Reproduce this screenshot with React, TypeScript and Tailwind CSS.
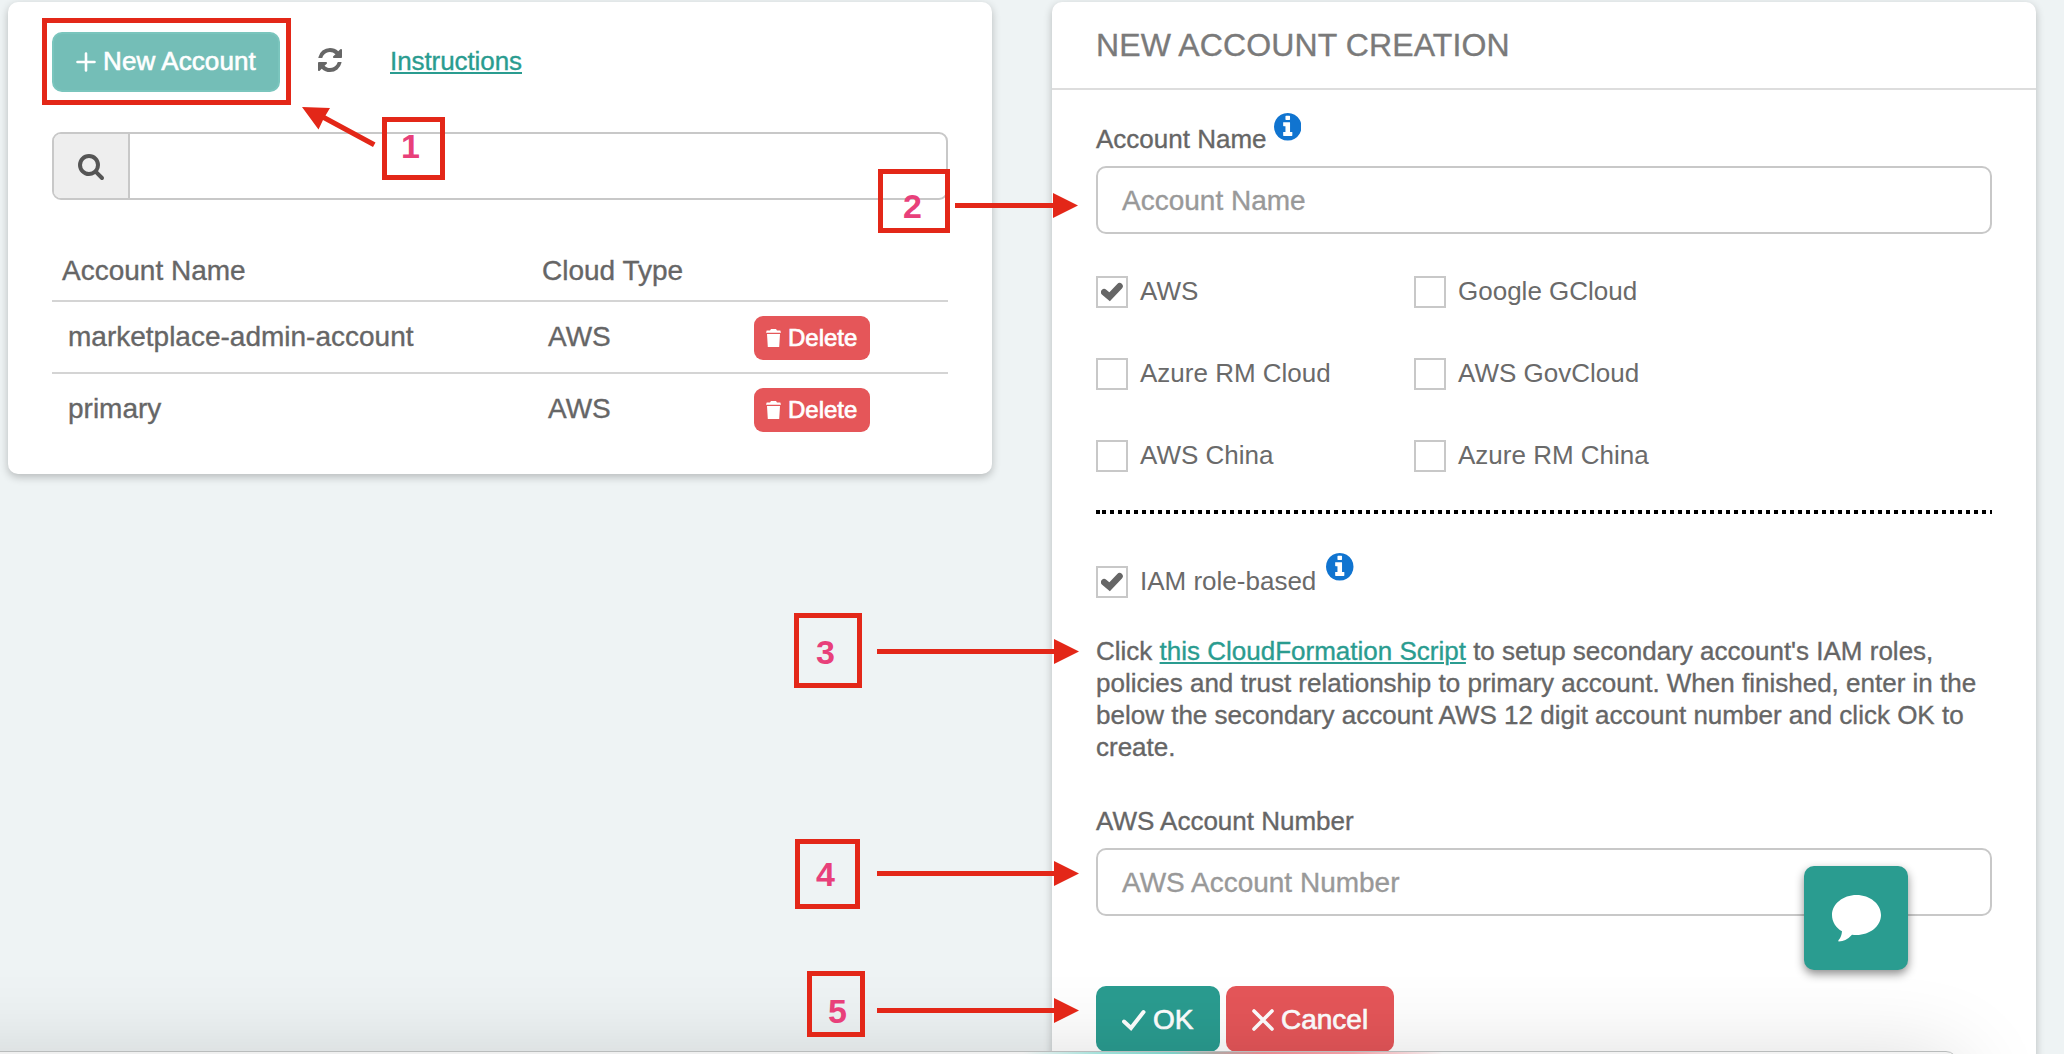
import React from "react";

const REFRESH =
  "M1639 1056q0 5-1 7-64 268-268 434.5t-478 166.5q-146 0-282.5-55t-243.5-157l-129 129q-19 19-45 19t-45-19-19-45v-448q0-26 19-45t45-19h448q26 0 45 19t19 45-19 45l-137 137q71 66 161 102t187 36q134 0 250-65t186-179q11-17 53-117 8-23 30-23h192q13 0 22.5 9.5t9.5 22.5zm25-800v448q0 26-19 45t-45 19h-448q-26 0-45-19t-19-45 19-45l138-138q-148-137-349-137-134 0-250 65t-186 179q-11 17-53 117-8 23-30 23h-199q-13 0-22.5-9.5t-9.5-22.5v-7q65-268 270-434.5t480-166.5q146 0 284 55.5t245 156.5l130-129q19-19 45-19t45 19 19 45z";
const SEARCH =
  "M1216 832q0-185-131.5-316.5t-316.5-131.5-316.5 131.5-131.5 316.5 131.5 316.5 316.5 131.5 316.5-131.5 131.5-316.5zm512 832q0 52-38 90t-90 38q-54 0-90-38l-343-342q-179 124-399 124-143 0-273.5-55.5t-225-150-150-225-55.5-273.5 55.5-273.5 150-225 225-150 273.5-55.5 273.5 55.5 225 150 150 225 55.5 273.5q0 220-124 399l343 343q37 37 37 90z";
const INFO =
  "M1152 1376v-160q0-14-9-23t-23-9h-96v-512q0-14-9-23t-23-9h-320q-14 0-23 9t-9 23v160q0 14 9 23t23 9h96v320h-96q-14 0-23 9t-9 23v160q0 14 9 23t23 9h448q14 0 23-9t9-23zm-128-896v-160q0-14-9-23t-23-9h-192q-14 0-23 9t-9 23v160q0 14 9 23t23 9h192q14 0 23-9t9-23zm640 416q0 209-103 385.5t-279.5 279.5-385.5 103-385.5-103-279.5-279.5-103-385.5 103-385.5 279.5-279.5 385.5-103 385.5 103 279.5 279.5 103 385.5z";

function Info() {
  return (
    <svg className="size-[27.5px] shrink-0 text-[#1074d0]" viewBox="128 128 1536 1536" fill="currentColor">
      <path d={INFO} />
    </svg>
  );
}

function Check({ label, checked = false }: { label: string; checked?: boolean }) {
  return (
    <label className="flex h-8 items-start">
      <span className="flex size-8 items-center justify-center border-2 border-[#c8c8c8] bg-white">
        {checked && (
          <svg className="h-5 w-[22px]" viewBox="0 0 22 20" fill="none" stroke="#666" strokeWidth="6.4" strokeLinecap="round" strokeLinejoin="miter">
            <path d="M3.2 10.2 L8.6 14.8 L18.6 4.2" />
          </svg>
        )}
      </span>
      <span className="ml-3 leading-[30px] text-[#6a6a6a] [-webkit-text-stroke:0]">{label}</span>
    </label>
  );
}

function Row({ name }: { name: string }) {
  return (
    <div className="flex h-[72px] items-start border-t-2 border-[#d4d4d4] pl-4 text-[28px]">
      <span className="w-[480px] pt-[19px] leading-8">{name}</span>
      <span className="w-[206px] pt-[19px] leading-8">AWS</span>
      <button className="mt-3.5 flex h-11 w-[116px] items-center rounded-[9px] bg-[#e55659] pl-3 text-2xl text-white [-webkit-text-stroke:0.7px_white]">
        <svg className="mr-[7px] h-[18px] w-[15px]" viewBox="0 0 15 18" fill="currentColor">
          <path d="M5 0h5l1 1.5h3.3l.7 2.2H0l.7-2.200H4zM1 5h13l-.8 13H1.800z" />
        </svg>
        Delete
      </button>
    </div>
  );
}

function LeftPanel() {
  return (
    <section className="h-[472px] w-[984px] shrink-0 rounded-[10px] bg-white px-11 pt-[30px] shadow-[0_3px_8px_rgba(0,0,0,0.24)]">
      <div className="flex h-[60px] items-center">
        <button className="flex h-[60px] w-[228px] items-center rounded-[10px] border-2 border-[#7ac5bd] bg-[#74beb7] pl-[22px] text-white [-webkit-text-stroke:0.6px_white]">
          <svg className="mr-[7px] size-5" viewBox="0 0 20 20" stroke="currentColor" strokeWidth="2.6" strokeLinecap="round">
            <path d="M10 1.500v17M1.500 10h17" />
          </svg>
          <span className="pb-0.5 tracking-[0.1px]">New Account</span>
        </button>
        <svg className="mb-1 ml-[38px] size-6 text-[#666]" viewBox="128 128 1536 1536" fill="currentColor">
          <path d={REFRESH} />
        </svg>
        <a className="ml-12 pb-0.5 tracking-[-0.08px] text-[#2a9c90] underline decoration-2 underline-offset-2">Instructions</a>
      </div>
      <div className="mt-10 flex h-[68px] rounded-[9px] border-2 border-[#c8c8c8]">
        <span className="flex w-[76px] items-center justify-center rounded-l-[7px] border-r-2 border-[#c8c8c8] bg-[#eee] pr-px pt-0.5">
          <svg className="size-[26px] text-[#555]" viewBox="64 128 1664 1664" fill="currentColor">
            <path d={SEARCH} />
          </svg>
        </span>
      </div>
      <div className="flex h-[100px] items-end pb-[13px] pl-2.5 text-[28px] leading-8">
        <span className="w-[480px]">Account Name</span>
        <span>Cloud Type</span>
      </div>
      <Row name="marketplace-admin-account" />
      <Row name="primary" />
    </section>
  );
}

function Field({ text }: { text: string }) {
  return (
    <div className="h-[68px] rounded-[10px] border-2 border-[#c8c8c8] pl-6 text-[28px] leading-[66px] text-[#999]">{text}</div>
  );
}

function RightPanel() {
  return (
    <section className="h-[1100px] w-[984px] shrink-0 rounded-[10px] bg-white shadow-[0_3px_8px_rgba(0,0,0,0.24)]">
      <h1 className="h-[88px] border-b-2 border-[#ddd] pl-11 text-[32px] leading-[86px] tracking-[0.12px] text-[#7a7a7a]">NEW ACCOUNT CREATION</h1>
      <div className="px-11">
        <div className="flex h-[76px] items-start pt-[23px]">
          <span className="mr-[7px] pt-[11px] leading-[30px]">Account Name</span>
          <Info />
        </div>
        <Field text="Account Name" />
        <div className="mt-[42px] grid grid-cols-[318px_1fr] gap-y-[50px]">
          <Check label="AWS" checked />
          <Check label="Google GCloud" />
          <Check label="Azure RM Cloud" />
          <Check label="AWS GovCloud" />
          <Check label="AWS China" />
          <Check label="Azure RM China" />
        </div>
        <div className="mt-[38px] flex h-1 gap-0.5">
          <span className="w-1 bg-black" />
          <span className="flex-1 bg-[repeating-linear-gradient(90deg,#000_0_4px,transparent_4px_8px)]" />
        </div>
        <div className="mt-[39px] flex h-[45px] items-start gap-2.5">
          <div className="pt-[13px]">
            <Check label="IAM role-based" checked />
          </div>
          <Info />
        </div>
        <p className="mt-[37px] leading-8">
          Click <a className="text-[#2a9c90] underline decoration-2 underline-offset-2">this CloudFormation Script</a> to setup secondary account's IAM roles,
          <br />
          policies and trust relationship to primary account. When finished, enter in the
          <br />
          below the secondary account AWS 12 digit account number and click OK to
          <br />
          create.
        </p>
        <div className="mt-[42px] h-[43px] leading-8">AWS Account Number</div>
        <Field text="AWS Account Number" />
        <div className="mt-[70px] flex gap-1.5 text-[28px] text-white [-webkit-text-stroke:0.7px_white]">
          <button className="flex h-[66px] w-[124px] items-center rounded-[10px] bg-[#2a9c90] pl-[26px] pt-0.5">
            <svg className="mr-[7px] h-[22px] w-6" viewBox="0 0 24 22" fill="none" stroke="currentColor" strokeWidth="4" strokeLinecap="round">
              <path d="M2 12.500 L9 19 L21.500 3" />
            </svg>
            OK
          </button>
          <button className="flex h-[66px] w-[168px] items-center rounded-[10px] bg-[#e55659] pl-[26px] pt-0.5">
            <svg className="mr-[7px] size-[22px]" viewBox="0 0 22 22" fill="none" stroke="currentColor" strokeWidth="3.6" strokeLinecap="round">
              <path d="M2 2 L20 20 M20 2 L2 20" />
            </svg>
            Cancel
          </button>
        </div>
      </div>
    </section>
  );
}

/* Numbered callouts lying over the page */
function Callout({ n, box, num }: { n: string; box: string; num: string }) {
  return (
    <div className={"absolute border-[5px] border-[#e32718] " + box}>
      <span className={"absolute text-[34px] font-bold leading-none text-[#e8407a] [-webkit-text-stroke:0] " + num}>{n}</span>
    </div>
  );
}

function Arrow({ at, shaft }: { at: string; shaft: string }) {
  return (
    <div className={"absolute flex h-[26px] items-center " + at}>
      <span className={"h-[5px] bg-[#e32718] " + shaft} />
      <svg className="h-[25px] w-[25px]" viewBox="0 0 25 25" fill="#e32718">
        <path d="M0 0L25 12.500L0 25z" />
      </svg>
    </div>
  );
}

export default function App() {
  return (
    <div className="relative h-[1054px] w-[2064px] overflow-hidden bg-[#eef3f4] font-['Liberation_Sans',Arial,sans-serif] text-[26px] text-[#666] [-webkit-text-stroke:0.35px_currentColor]">
      <main className="flex items-start gap-[60px] pl-2 pt-0.5">
        <LeftPanel />
        <RightPanel />
      </main>

      {/* Top edge and shadow of the window in front */}
      <div className="absolute -left-52 top-[1051px] h-[300px] w-[2166px] rounded-[12px] border border-[#b9bcbc] bg-[linear-gradient(90deg,#f0f0f0_0_1230px,#9fe0d9_1310px,#7fcfc6_1380px,#b0a8a4_1420px,#e58a90_1470px,#f0a0a6_1560px,#f3f3f3_1650px)] shadow-[0_10px_90px_rgba(0,0,0,0.16)]" />

      <div className="absolute left-[1804px] top-[866px] flex size-[104px] items-center justify-center rounded-[10px] bg-[#2a9c90] shadow-[0_4px_10px_rgba(0,0,0,0.45)]">
        <svg className="h-[47px] w-[49px]" viewBox="0 0 49 47" fill="#fff">
          <path d="M24.500 0C38 0 49 9 49 20S38 40 24.500 40Q22 40 20 39.700Q14 46.500 6.500 46.400Q6 45.500 6.800 44.800Q9.500 42 10 36.300C4 32.800 0 27 0 20C0 9 11 0 24.500 0z" />
        </svg>
      </div>

      <div className="absolute left-[42px] top-[18px] h-[87px] w-[249px] border-[5px] border-[#e32718]" />
      <svg className="absolute left-[300px] top-[104px] h-[46px] w-[78px]" viewBox="0 0 78 46" fill="#e32718">
        <path d="M2 3L30 4L25.500 11.500L75.500 38.500L73 43L23 16L18.500 25.500z" />
      </svg>
      <Callout n="1" box="left-[382px] top-[117px] h-[63px] w-[63px]" num="left-[14px] top-[7px]" />
      <Callout n="2" box="left-[878px] top-[169px] h-[64px] w-[72px]" num="left-[20px] top-[15px]" />
      <Callout n="3" box="left-[794px] top-[613px] h-[75px] w-[68px]" num="left-[17px] top-[17px]" />
      <Callout n="4" box="left-[795px] top-[839px] h-[70px] w-[65px]" num="left-[16px] top-[13px]" />
      <Callout n="5" box="left-[807px] top-[971px] h-[66px] w-[58px]" num="left-[16px] top-[18px]" />
      <Arrow at="left-[955px] top-[192px]" shaft="w-[98px]" />
      <Arrow at="left-[877px] top-[638px]" shaft="w-[177px]" />
      <Arrow at="left-[877px] top-[860px]" shaft="w-[177px]" />
      <Arrow at="left-[877px] top-[997px]" shaft="w-[177px]" />
    </div>
  );
}
